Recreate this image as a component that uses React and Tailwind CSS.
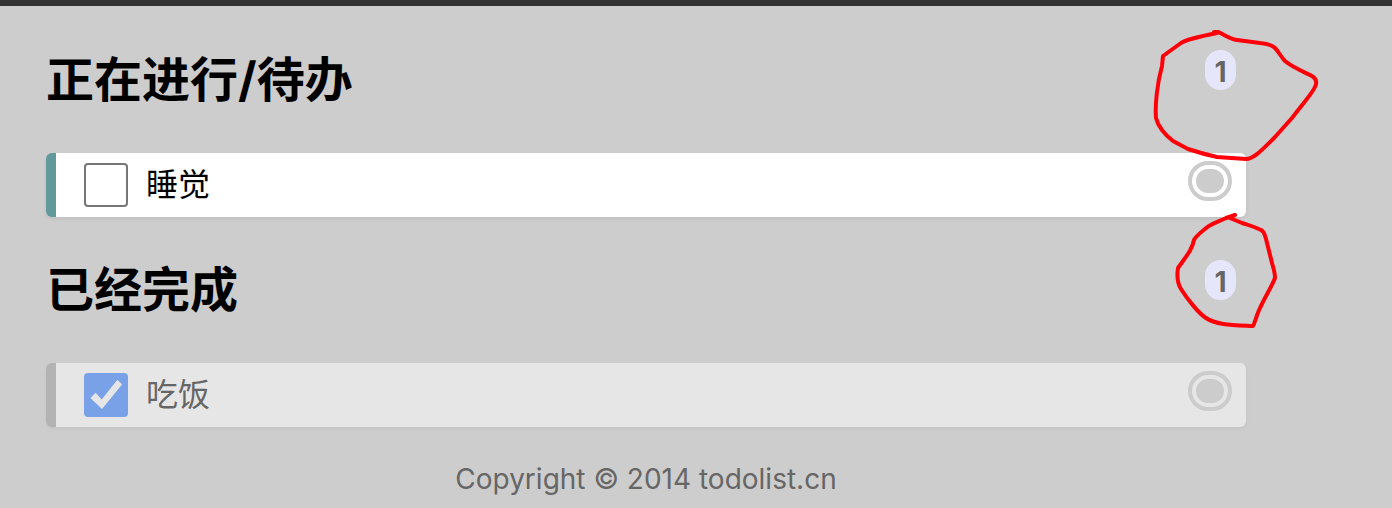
const sections = [
  { title: "正在进行/待办", done: false, items: [{ id: "sleep", text: "睡觉" }] },
  { title: "已经完成", done: true, items: [{ id: "eat", text: "吃饭" }] },
];

function CheckBox({ id, checked }) {
  return (
    <span className="relative block size-11 shrink-0">
      <input
        id={id}
        type="checkbox"
        defaultChecked={checked}
        className="peer block size-11 appearance-none rounded border-2 border-[#767676] bg-white checked:border-[#79a1e8] checked:bg-[#79a1e8]"
      />
      <svg
        viewBox="0 0 44 44"
        className="pointer-events-none absolute inset-0 hidden size-11 peer-checked:block"
        aria-hidden="true"
      >
        <path d="M6.4 25 11.7 19.7 17.7 26.6 33.4 6.7 38 11.4 18 36Z" fill="#e6e6e6" />
      </svg>
    </span>
  );
}

function TodoItem({ item, done }) {
  return (
    <li
      className={
        done
          ? "flex h-16 items-center rounded-md border-l-10 border-[#b3b3b3] bg-[#e6e6e6] pr-3.5 pl-7 text-[#666] shadow-[0_2px_4px_rgba(0,0,0,0.04)]"
          : "flex h-16 items-center rounded-md border-l-10 border-[#629a9c] bg-white pr-3.5 pl-7 text-black shadow-[0_2px_4px_rgba(0,0,0,0.07)]"
      }
    >
      <CheckBox id={item.id} checked={done} />
      <label htmlFor={item.id} className="ml-[18px] flex-1 text-[32px] leading-10">
        {item.text}
      </label>
      <button
        type="button"
        aria-label="删除"
        className="mb-2 flex h-10 w-11 items-center justify-center rounded-[22px] border-4 border-[#ccc]"
      >
        <span className="h-6 w-7 rounded-[14px] bg-[#ccc]" />
      </button>
    </li>
  );
}

export default function App() {
  return (
    <div className="relative min-h-screen overflow-hidden border-t-6 border-[#333] bg-[#cdcdcd] font-['Inter','Noto_Sans_CJK_SC',sans-serif]">
      <main className="flex flex-col gap-[43px] pt-11 pr-[146px] pl-[46px]">
        {sections.map((section) => (
          <section key={section.title} className="flex flex-col gap-[43px]">
            <header className="flex min-h-[60px] items-start justify-between pr-2.5">
              <h2 className="text-5xl leading-[60px] font-bold text-black">
                {section.title}
              </h2>
              <span className="flex h-10 min-w-[31px] items-center justify-center rounded-[20px] bg-[#e6e6fa] px-2 pt-1 text-[28px] leading-9 font-bold text-[#666]">
                {section.items.length}
              </span>
            </header>
            <ul>
              {section.items.map((item) => (
                <TodoItem key={item.id} item={item} done={section.done} />
              ))}
            </ul>
          </section>
        ))}
      </main>
      <footer className="pt-8 pr-[146px] pl-[46px] text-center text-[28px] leading-10 text-[#666]">
        Copyright © 2014 todolist.cn
      </footer>
      <svg
        viewBox="0 6 1392 502"
        width="1392"
        height="502"
        className="pointer-events-none absolute top-0 left-0 max-w-none"
        fill="none"
        stroke="#ff0008"
        strokeWidth="4"
        strokeLinecap="round"
        strokeLinejoin="round"
        aria-hidden="true"
      >
        <path d="M1214 32H1218C1222 33 1229 39 1237 40L1260 43Q1271 44 1275 48C1279 52 1281 57 1285 61C1292 67 1304 72 1312 76Q1317 79 1316 84C1315 91 1303 103 1292 118L1275 137C1264 148 1254 159 1246 159L1217 157Q1203 154 1188 149L1173 141Q1159 130 1156 118C1155 105 1157 84 1162 66L1163 56L1181 43Q1187 39 1217 33" />
        <path d="M1235 215 1226 218C1218 222 1210 224 1205 229Q1196 236 1194 240C1192 250 1187 255 1178 268Q1176 281 1181 289C1186 297 1198 313 1206 318C1216 325 1233 325 1253 326C1255 323 1257 313 1261 306C1265 297 1272 286 1275 278C1275 272 1273 267 1272 263L1266 239Q1264 231 1261 230C1255 227 1248 225 1242 223L1230 218" />
      </svg>
    </div>
  );
}
